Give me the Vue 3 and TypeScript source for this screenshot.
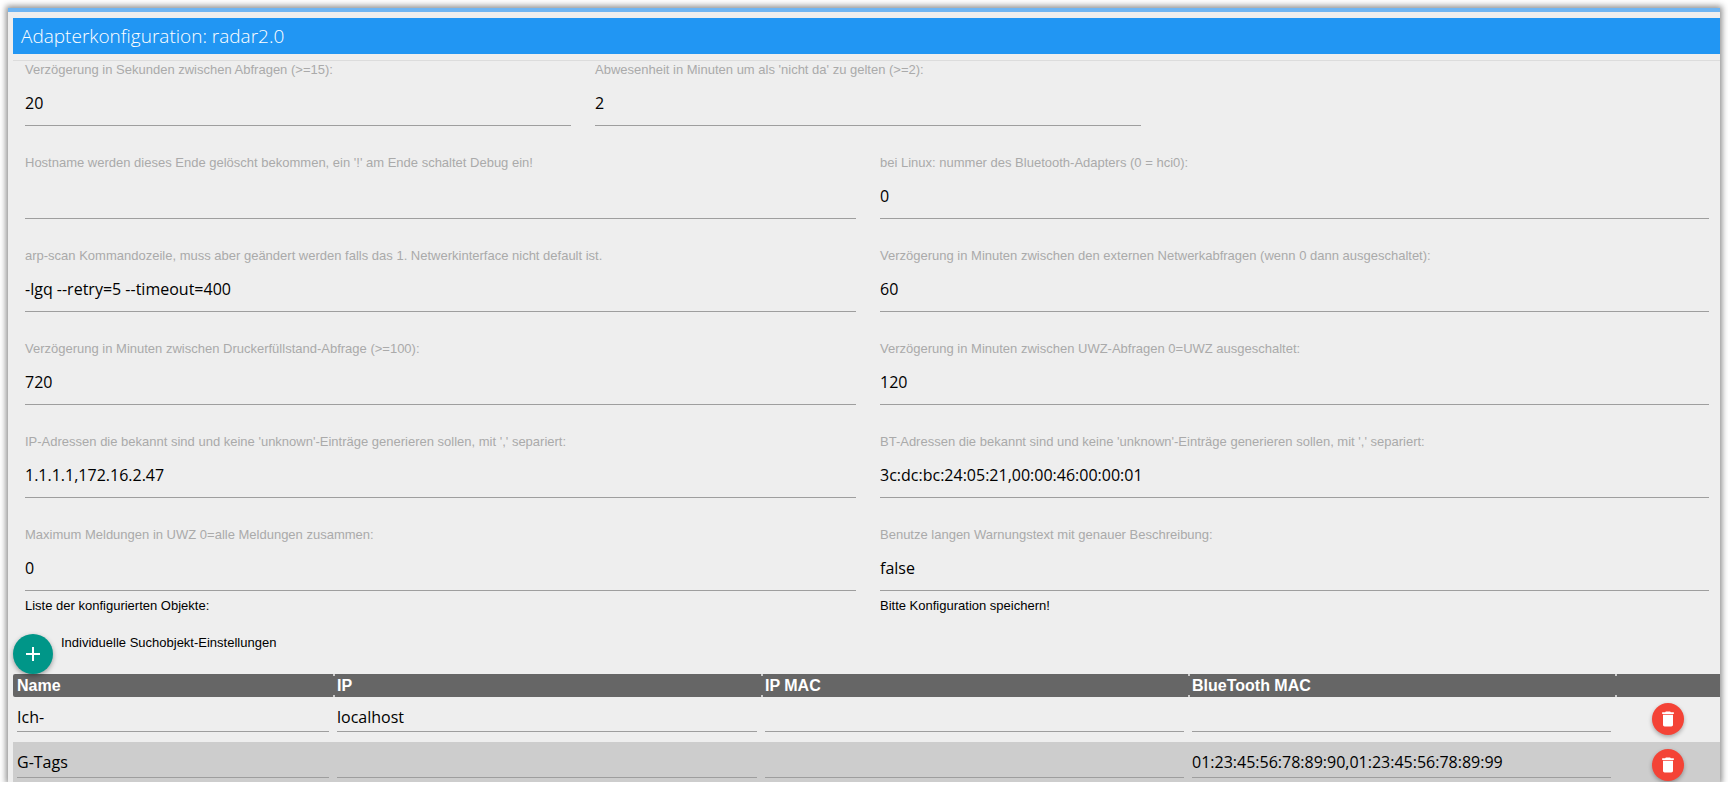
<script setup lang="ts">
interface Field {
  label: string
  value: string
}

const topRow: Field[] = [
  { label: 'Verzögerung in Sekunden zwischen Abfragen (>=15):', value: '20' },
  { label: "Abwesenheit in Minuten um als 'nicht da' zu gelten (>=2):", value: '2' },
]

const rows: Field[][] = [
  [
    { label: "Hostname werden dieses Ende gelöscht bekommen, ein '!' am Ende schaltet Debug ein!", value: '' },
    { label: 'bei Linux: nummer des Bluetooth-Adapters (0 = hci0):', value: '0' },
  ],
  [
    { label: 'arp-scan Kommandozeile, muss aber geändert werden falls das 1. Netwerkinterface nicht default ist.', value: '-lgq --retry=5 --timeout=400' },
    { label: 'Verzögerung in Minuten zwischen den externen Netwerkabfragen (wenn 0 dann ausgeschaltet):', value: '60' },
  ],
  [
    { label: 'Verzögerung in Minuten zwischen Druckerfüllstand-Abfrage (>=100):', value: '720' },
    { label: 'Verzögerung in Minuten zwischen UWZ-Abfragen 0=UWZ ausgeschaltet:', value: '120' },
  ],
  [
    { label: "IP-Adressen die bekannt sind und keine 'unknown'-Einträge generieren sollen, mit ',' separiert:", value: '1.1.1.1,172.16.2.47' },
    { label: "BT-Adressen die bekannt sind und keine 'unknown'-Einträge generieren sollen, mit ',' separiert:", value: '3c:dc:bc:24:05:21,00:00:46:00:00:01' },
  ],
  [
    { label: 'Maximum Meldungen in UWZ 0=alle Meldungen zusammen:', value: '0' },
    { label: 'Benutze langen Warnungstext mit genauer Beschreibung:', value: 'false' },
  ],
]

const columns = ['Name', 'IP', 'IP MAC', 'BlueTooth MAC', '']

const devices = [
  ['Ich-', 'localhost', '', ''],
  ['G-Tags', '', '', '01:23:45:56:78:89:90,01:23:45:56:78:89:99'],
]
</script>

<template>
  <div class="window">
    <div class="strip"></div>
    <h1 class="title">Adapterkonfiguration: radar2.0</h1>
    <div class="content">
      <div class="row top">
        <div v-for="f in topRow" :key="f.label" class="field">
          <label>{{ f.label }}</label>
          <div class="value">{{ f.value }}</div>
        </div>
      </div>
      <div v-for="(row, i) in rows" :key="i" class="row" :class="{ compact: i === rows.length - 1 }">
        <div v-for="f in row" :key="f.label" class="field">
          <label>{{ f.label }}</label>
          <div class="value">{{ f.value }}</div>
        </div>
      </div>
      <div class="row notes">
        <span>Liste der konfigurierten Objekte:</span>
        <span>Bitte Konfiguration speichern!</span>
      </div>
    </div>
    <div class="add-line">
      <button class="fab">
        <svg width="24" height="24" viewBox="0 0 24 24"><path d="M19 13h-6v6h-2v-6H5v-2h6V5h2v6h6v2z" fill="#fff" /></svg>
      </button>
      <span>Individuelle Suchobjekt-Einstellungen</span>
    </div>
    <div class="table">
      <div class="thead">
        <div v-for="c in columns" :key="c" class="th">{{ c }}</div>
      </div>
      <div v-for="(d, i) in devices" :key="i" class="tr" :class="{ odd: i === 1 }">
        <div v-for="(cell, j) in d" :key="j" class="td">
          <div class="cell">{{ cell }}</div>
        </div>
        <div class="td action">
          <button class="del">
            <svg width="20" height="20" viewBox="0 0 24 24"><path d="M6 19c0 1.1.9 2 2 2h8c1.1 0 2-.9 2-2V7H6v12zM19 4h-3.5l-1-1h-5l-1 1H5v2h14V4z" fill="#fff" /></svg>
          </button>
        </div>
      </div>
    </div>
  </div>
</template>

<style>
html,
body {
  background: #fff;
  overflow: hidden;
}
</style>

<style scoped>
.window {
  width: 1712px;
  height: 774px;
  margin: 8px 0 0 8px;
  background: #eee;
  box-shadow: 0 0 6px 2px rgba(0, 0, 0, 0.45);
  overflow: hidden;
  font-family: "Liberation Sans", sans-serif;
}

.strip {
  height: 4px;
  background: #6fb5f2;
  margin-bottom: 6px;
}

.title {
  margin: 0 0 0 5px;
  height: 36px;
  padding-left: 8px;
  background: #2196f3;
  color: #fff;
  font: 300 19px/37px "Open Sans", sans-serif;
}

.content {
  margin: 6px 0 0 5px;
  padding: 2px 11px 0 12px;
  border-top: 1px solid #dcdcdc;
}

.row {
  display: grid;
  grid-template-columns: 831px 829px;
  column-gap: 24px;
  height: 93px;
}

.row.top {
  grid-template-columns: 546px 546px;
}

.row.compact {
  height: 71px;
}

.field {
  display: flex;
  flex-direction: column;
}

label {
  color: #aaa;
  font-size: 13px;
  line-height: 14px;
}

.value {
  height: 44px;
  padding-top: 4px;
  border-bottom: 1px solid #9e9e9e;
  color: #000;
  font: 16px/44px "Open Sans", sans-serif;
}

.notes {
  height: 14px;
  font-size: 13px;
  line-height: 14px;
  color: #000;
}

.add-line {
  height: 40px;
  margin: 21px 0 0 5px;
  display: flex;
  gap: 8px;
  font-size: 13px;
  line-height: 14px;
  color: #000;
}

.add-line span {
  margin-top: 2px;
}

.fab {
  width: 40px;
  height: 40px;
  padding: 0;
  border: none;
  border-radius: 50%;
  background: #009688;
  box-shadow: 0 2px 5px rgba(0, 0, 0, 0.35);
  display: flex;
  align-items: center;
  justify-content: center;
}

.table {
  margin-left: 5px;
}

.thead,
.tr {
  display: grid;
  grid-template-columns: 320px 428px 427px 427px 105px;
}

.thead {
  height: 23px;
  background: #666;
  border-radius: 2px 0 0 2px;
}

.th {
  color: #fff;
  font: bold 16px/23px "Liberation Sans", sans-serif;
  padding-left: 4px;
}

/* little light dots where the header cells meet */
.th + .th {
  background:
    linear-gradient(#ccc, #ccc) left top / 2px 2px no-repeat,
    linear-gradient(#ccc, #ccc) left bottom / 2px 2px no-repeat;
}

.tr {
  height: 45px;
}

.tr.odd {
  height: 46px;
  background: #cdcdcd;
}

.td {
  padding: 0 4px;
}

.cell {
  height: 34px;
  border-bottom: 1px solid #9e9e9e;
  font: 16px/40px "Open Sans", sans-serif;
  color: #000;
  white-space: nowrap;
}

.odd .cell {
  height: 35px;
}

.action {
  display: flex;
  justify-content: center;
}

.del {
  width: 32px;
  height: 32px;
  margin-top: 6px;
  padding: 0;
  border: none;
  border-radius: 50%;
  background: #f44336;
  box-shadow: 0 2px 4px rgba(0, 0, 0, 0.3);
  display: flex;
  align-items: center;
  justify-content: center;
}

.odd .del {
  margin-top: 7px;
}
</style>
